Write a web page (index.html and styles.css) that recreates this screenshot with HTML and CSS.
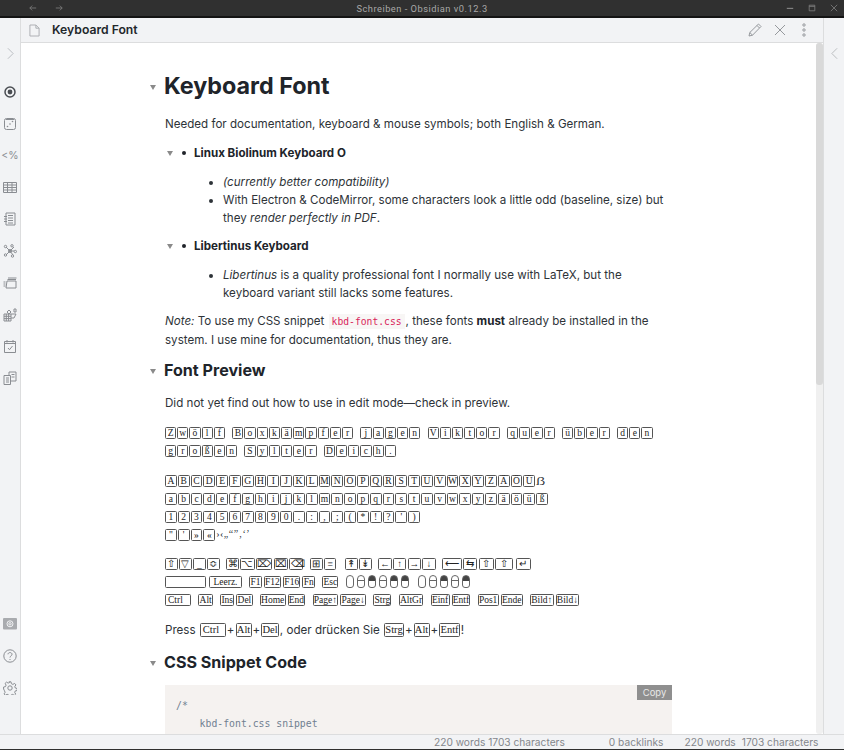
FILE: index.html
```html
<!DOCTYPE html>
<html lang="en">
<head>
    <meta charset="UTF-8">
    <title>Schreiben - Obsidian v0.12.3</title>
    <link rel="stylesheet" href="styles.css">
</head>
<body>

<div class="titlebar">
    <div class="nav-arrows">
        <svg class="win-icon" viewBox="0 0 10 10"><path d="M9 5H1M4 2L1 5l3 3"/></svg>
        <svg class="win-icon" viewBox="0 0 10 10"><path d="M1 5h8M6 2l3 3-3 3"/></svg>
    </div>
    <div class="window-title">Schreiben - Obsidian v0.12.3</div>
    <div class="win-controls">
        <svg class="win-icon" viewBox="0 0 10 10"><path d="M1 5.500h8" stroke-width="1.500"/></svg>
        <svg class="win-icon" viewBox="0 0 10 10"><path d="M1.500 1.500h7v7h-7zM1.500 3h7"/></svg>
        <svg class="win-icon" viewBox="0 0 10 10"><path d="M1 1l8 8M9 1l-8 8"/></svg>
    </div>
</div>

<div class="workspace">
    <div class="rail rail-left">
        <div class="rail-group">
            <svg class="rail-toggle" viewBox="0 0 8 14"><path d="M1 1l6 6-6 6"/></svg>
        </div>
        <div class="rail-icons">
            <svg class="rail-icon active" viewBox="0 0 14 14"><circle cx="7" cy="7" r="5" stroke-width="1.500"/><circle class="solid" cx="7" cy="7" r="2.400"/></svg>
            <svg class="rail-icon" viewBox="0 0 14 14"><rect x="1.500" y="1.500" width="11" height="11" rx="2"/><path d="M3 2.500h8"/><circle class="solid" cx="4.500" cy="9.500" r=".8"/><circle class="solid" cx="7" cy="7" r=".8"/><circle class="solid" cx="9.500" cy="4.500" r=".8"/></svg>
            <span class="rail-text">&lt;%</span>
            <svg class="rail-icon" viewBox="0 0 14 14"><path d="M.5 2.500h13v10H.5zM.5 5h13M.5 7.500h13M.5 10h13M4.500 2.500v10M9 2.500v10"/></svg>
            <svg class="rail-icon" viewBox="0 0 14 14"><path d="M3 1h9v12H3zM5 3.500h5M5 6h5M5 8.500h5M5 11h5M1 4.500h3M1 7h3M1 9.500h3"/></svg>
            <svg class="rail-icon" viewBox="0 0 14 14"><path d="M7 7L3 3M7 7l4-4M7 7L3 11M7 7l3 4M7 7h4"/><circle cx="7" cy="7" r="1.500"/><circle cx="2.500" cy="2.500" r="1.200"/><circle cx="9" cy="1.800" r="1.200"/><circle cx="2.500" cy="11" r="1.200"/><circle cx="9.500" cy="12" r="1.200"/><circle cx="12.300" cy="7.500" r="1.200"/></svg>
            <svg class="rail-icon" viewBox="0 0 14 14"><path d="M4 5h9v7H3zM4.500 3.500h8.500M5 2h8.500M.5 6h2M.5 8h2M.5 10h2"/></svg>
            <svg class="rail-icon" viewBox="0 0 14 14"><path d="M1 6h7v7H1zM1 8.300h7M1 10.600h7M3.300 6v7M5.600 6v7M4 4l2-2 2 2-2 2zM8 6h5l-2 4H8M11 1h2v3h-2z"/></svg>
            <svg class="rail-icon" viewBox="0 0 14 14"><path d="M1.500 2.500h11v11h-11zM1.500 4.500h11M4 1v2.500M10 1v2.500M5 9l1.500 1.700L9.500 7"/></svg>
            <svg class="rail-icon" viewBox="0 0 14 14"><path d="M1 4.500h6.500v9H1zM6 4.500V1h7v9H7.500M3 7h3M3 9h3M3 11h3M8.500 3.500h3M8.500 6h3"/></svg>
        </div>
        <div class="rail-icons rail-bottom">
            <svg class="rail-icon" viewBox="0 0 14 14"><rect class="solid soft" x="0" y="1" width="14" height="11.500" rx="1"/><circle class="white" cx="7" cy="6.800" r="3"/><circle class="white" cx="7" cy="6.800" r="1.200"/></svg>
            <svg class="rail-icon" viewBox="0 0 14 14"><circle cx="7" cy="7" r="6.200"/><path d="M5 5.300C5 3 9 3 9 5.300 9 7 7 6.800 7 8.500M7 10v1"/></svg>
            <svg class="rail-icon" viewBox="0 0 14 14"><circle cx="7" cy="7" r="2.200"/><path d="M6 .8h2l.4 1.900 1.500.7 1.700-1 1.300 1.500-1.100 1.600.5 1.500 1.900.5v2l-1.900.4-.6 1.500 1 1.700-1.400 1.300-1.600-1-1.500.5-.5 1.900H6l-.4-1.900-1.500-.6-1.700 1-1.300-1.400 1-1.600-.6-1.500L.6 8V6l1.900-.4.6-1.500-1-1.700 1.400-1.300 1.600 1 1.500-.6z"/></svg>
        </div>
    </div>

    <div class="main">
        <div class="view-header">
            <svg class="file-icon" viewBox="0 0 12 14"><path d="M1 1h6.500L11 4.500V13H1zM7.500 1v3.500H11"/></svg>
            <div class="view-title">Keyboard Font</div>
            <div class="view-actions">
                <svg class="action-icon" viewBox="0 0 14 14"><path d="M1 13l.8-3.500L10.500 1 13 3.500 4.500 12.200zM1.800 9.500l2.700 2.700M9 2.500L11.500 5"/></svg>
                <svg class="action-icon" viewBox="0 0 14 14"><path d="M2 2l10 10M12 2L2 12"/></svg>
                <svg class="action-icon" viewBox="0 0 14 14"><circle cx="7" cy="2" r="1.200"/><circle cx="7" cy="7" r="1.200"/><circle cx="7" cy="12" r="1.200"/></svg>
            </div>
        </div>

        <div class="view-body">
            <div class="preview">
                <h1><span class="fold"></span>Keyboard Font</h1>
                <p class="intro">Needed for documentation, keyboard &amp; mouse symbols; both English &amp; German.</p>

                <ul class="outer">
                    <li><span class="fold fold-li"></span><strong>Linux Biolinum Keyboard O</strong>
                        <ul class="inner">
                            <li><em>(currently better compatibility)</em></li>
                            <li>With Electron &amp; CodeMirror, some characters look a little odd (baseline, size) but they <em>render perfectly in PDF</em>.</li>
                        </ul>
                    </li>
                    <li><span class="fold fold-li"></span><strong>Libertinus Keyboard</strong>
                        <ul class="inner">
                            <li><em>Libertinus</em> is a quality professional font I normally use with LaTeX, but the keyboard variant still lacks some features.</li>
                        </ul>
                    </li>
                </ul>

                <p class="note"><em>Note:</em> To use my CSS snippet <code>kbd-font.css</code>, these fonts <strong>must</strong> already be installed in the system. I use mine for documentation, thus they are.</p>

                <h2><span class="fold"></span>Font Preview</h2>
                <p class="lead">Did not yet find out how to use in edit mode—check in preview.</p>

                <p class="keys"><span class="word"><b>Z</b><b>w</b><b>ö</b><b>l</b><b>f</b></span> <span class="word"><b>B</b><b>o</b><b>x</b><b>k</b><b>ä</b><b>m</b><b>p</b><b>f</b><b>e</b><b>r</b></span> <span class="word"><b>j</b><b>a</b><b>g</b><b>e</b><b>n</b></span> <span class="word"><b>V</b><b>i</b><b>k</b><b>t</b><b>o</b><b>r</b></span> <span class="word"><b>q</b><b>u</b><b>e</b><b>r</b></span> <span class="word"><b>ü</b><b>b</b><b>e</b><b>r</b></span> <span class="word"><b>d</b><b>e</b><b>n</b></span><br>
                <span class="word"><b>g</b><b>r</b><b>o</b><b>ß</b><b>e</b><b>n</b></span> <span class="word"><b>S</b><b>y</b><b>l</b><b>t</b><b>e</b><b>r</b></span> <span class="word"><b>D</b><b>e</b><b>i</b><b>c</b><b>h</b><b>.</b></span></p>

                <p class="keys keys-wide"><span class="word"><b>A</b><b>B</b><b>C</b><b>D</b><b>E</b><b>F</b><b>G</b><b>H</b><b>I</b><b>J</b><b>K</b><b>L</b><b>M</b><b>N</b><b>O</b><b>P</b><b>Q</b><b>R</b><b>S</b><b>T</b><b>U</b><b>V</b><b>W</b><b>X</b><b>Y</b><b>Z</b><b>Ä</b><b>Ö</b><b>Ü</b><i class="big">ẞ</i></span><br>
                <span class="word"><b>a</b><b>b</b><b>c</b><b>d</b><b>e</b><b>f</b><b>g</b><b>h</b><b>i</b><b>j</b><b>k</b><b>l</b><b>m</b><b>n</b><b>o</b><b>p</b><b>q</b><b>r</b><b>s</b><b>t</b><b>u</b><b>v</b><b>w</b><b>x</b><b>y</b><b>z</b><b>ä</b><b>ö</b><b>ü</b><b>ß</b></span><br>
                <span class="word"><b>1</b><b>2</b><b>3</b><b>4</b><b>5</b><b>6</b><b>7</b><b>8</b><b>9</b><b>0</b><b>.</b><b>:</b><b>,</b><b>;</b><b>(</b><b>*</b><b>!</b><b>?</b><b>'</b><b>)</b></span><br>
                <span class="word"><b>"</b><b>'</b><b>»</b><b>«</b><i>›‹„“”‚‘’</i></span></p>

                <p class="keys keys-mixed"><span class="word sym"><b>⇧</b><b>▽</b><b>_</b><b>≎</b></span> <span class="word sym"><b>⌘</b><b>⌥</b><b>⌦</b><b>⌧</b><b class="w14">⌫</b></span> <span class="word sym"><b>⊞</b><b>≡</b></span> <span class="word sym gap"><b>↟</b><b>↡</b></span> <span class="word sym arrows"><b>←</b><b>↑</b><b>→</b><b>↓</b></span> <span class="word sym"><b class="w20">⟵</b><b class="w14">⇆</b><b class="w15">⇧</b><b class="w18">⇧</b></span><b class="w15">↵</b><br>
                <span class="word"><b class="space"></b><b class="leerz">Leerz.</b></span> <span class="word labels"><b>F1</b><b>F12</b><b>F16</b><b>Fn</b></span> <span class="word labels"><b>Esc</b></span> <span class="mice"><u></u><u class="mid"></u><u class="left"></u><u class="mid"></u><u class="left"></u><u class="left"></u></span> <span class="mice"><u></u><u class="mid"></u><u class="left"></u><u class="mid"></u><u class="left"></u></span><br>
                <span class="word labels"><b class="ctrl">Ctrl</b></span> <span class="word labels"><b>Alt</b></span> <span class="word labels"><b>Ins</b><b>Del</b></span> <span class="word labels"><b>Home</b><b>End</b></span> <span class="word labels"><b>Page↑</b><b>Page↓</b></span> <span class="word labels"><b>Strg</b></span> <span class="word labels"><b>AltGr</b></span> <span class="word labels"><b>Einf</b><b>Entf</b></span> <span class="word labels"><b>Pos1</b><b>Ende</b></span> <span class="word labels"><b>Bild↑</b><b>Bild↓</b></span></p>

                <p class="press">Press <b class="ctrl">Ctrl</b>+<b>Alt</b>+<b>Del</b>, oder drücken Sie <b>Strg</b>+<b>Alt</b>+<b>Entf</b>!</p>

                <h2 class="snippet-title"><span class="fold"></span>CSS Snippet Code</h2>
                <div class="codeblock">
                    <button class="copy">Copy</button>
                    <pre>/*
    kbd-font.css snippet
</pre>
                </div>
            </div>
            <div class="scrollbar"><div class="thumb"></div></div>
        </div>
    </div>

    <div class="rail rail-right">
        <svg class="rail-toggle" viewBox="0 0 8 14"><path d="M7 1L1 7l6 6"/></svg>
    </div>
</div>

<div class="statusbar">
    <span class="status-a">220 words 1703 characters</span>
    <span class="status-b">0 backlinks</span>
    <span class="status-c">220 words</span>
    <span class="status-d">1703 characters</span>
</div>

</body>
</html>
```

FILE: styles.css
```css
html, body {
    margin: 0;
    padding: 0;
    height: 100%;
}
body {
    display: flex;
    flex-direction: column;
    height: 750px;
    overflow: hidden;
    font-family: Inter, "Liberation Sans", sans-serif;
    color: #2e3338;
    background-color: #f2f3f5;
    border-bottom: 1px solid #2f2f2f;
    box-sizing: border-box;
}

/* title bar */
.titlebar {
    display: flex;
    align-items: center;
    flex: none;
    position: relative;
    height: 16px;
    padding: 0 0 0 29px;
    background-color: #303030;
    border-bottom: 2px solid #141414;
}
.nav-arrows {
    display: flex;
    gap: 18px;
}
.win-icon {
    width: 8px;
    height: 8px;
    fill: none;
    stroke: #808080;
    stroke-width: 1;
}
.window-title {
    position: absolute;
    left: 0;
    right: 0;
    text-align: center;
    font-family: "Roboto", sans-serif;
    font-size: 9.300px;
    letter-spacing: .5px;
    color: #a8a8a8;
}
.win-controls {
    display: flex;
    gap: 14px;
    margin-left: auto;
    padding-right: 6px;
}

/* side rails */
.workspace {
    display: flex;
    flex: 1;
    min-height: 0;
}
.rail {
    flex: none;
    width: 20px;
    display: flex;
    flex-direction: column;
    align-items: center;
    background-color: #f2f3f5;
}
.rail-left {
    border-right: 1px solid #dcddde;
}
.rail-right {
    width: 20px;
    border-left: 1px solid #dcddde;
}
.rail-toggle {
    width: 7px;
    height: 13px;
    margin-top: 29px;
    fill: none;
    stroke: #b4b6ba;
    stroke-width: 1;
}
.rail-group {
    height: 60px;
}
.rail-left .rail-toggle {
    display: block;
}
.rail-icons {
    display: flex;
    flex-direction: column;
    align-items: center;
    gap: 17.800px;
    margin-top: 7px;
}
.rail-bottom {
    margin-top: auto;
    margin-bottom: 39px;
}
.rail-icon {
    width: 14px;
    height: 14px;
    fill: none;
    stroke: #8a8d92;
    stroke-width: 1;
}
.rail-icon.active {
    stroke: #4a4d52;
}
.rail-icon .solid {
    fill: #8a8d92;
    stroke: none;
}
.rail-icon.active .solid {
    fill: #4a4d52;
}
.rail-icon .soft {
    fill: #a9abaf;
}
.rail-icon .white {
    stroke: #f2f3f5;
}
.rail-text {
    height: 14px;
    line-height: 14px;
    font-size: 10.500px;
    color: #8a8d92;
}

/* main pane */
.main {
    flex: 1;
    min-width: 0;
    display: flex;
    flex-direction: column;
}
.view-header {
    flex: none;
    display: flex;
    align-items: center;
    height: 24px;
    border-bottom: 1px solid #dcddde;
}
.file-icon {
    width: 11px;
    height: 13px;
    margin-left: 8px;
    fill: none;
    stroke: #a9abaf;
    stroke-width: 1;
}
.view-title {
    margin-left: 12px;
    padding-bottom: 2px;
    font-size: 12.200px;
    font-weight: 600;
    color: #23272b;
}
.view-actions {
    display: flex;
    align-items: center;
    gap: 10.500px;
    margin-left: auto;
    padding-right: 12px;
}
.action-icon {
    width: 14px;
    height: 14px;
    fill: none;
    stroke: #8b8e93;
    stroke-width: .9;
}
.view-body {
    flex: 1;
    min-height: 0;
    display: flex;
    background-color: #fff;
}
.scrollbar {
    flex: none;
    width: 7px;
    background-color: #f0f0f0;
    border-radius: 3px;
}
.thumb {
    height: 342px;
    background-color: #d9d9d9;
    border-radius: 3px;
}

/* note preview */
.preview {
    flex: 1;
    min-width: 0;
    overflow: hidden;
    padding: 26px 0 0 144px;
    font-size: 11.600px;
    line-height: 18px;
}
.preview p {
    margin: 0;
    width: 500px;
}
.fold {
    display: inline-block;
    width: 0;
    height: 0;
    margin-left: -15.500px;
    margin-right: 8.500px;
    vertical-align: middle;
    border-left: 3.500px solid transparent;
    border-right: 3.500px solid transparent;
    border-top: 5px solid #8a8a8a;
}
h1 {
    margin: 0 0 12px;
    font-size: 23.300px;
    line-height: 34px;
    font-weight: 700;
    color: #20242a;
}
h2 {
    margin: 10px 0 13px;
    font-size: 16.100px;
    line-height: 22px;
    font-weight: 700;
    color: #20242a;
}
strong {
    font-weight: 700;
    color: #20242a;
}
.outer {
    list-style: none;
    margin: 11px 0 9px;
    padding: 0 0 0 29px;
    width: 480px;
}
.outer > li {
    position: relative;
    margin-bottom: 10px;
}
.outer > li::before {
    content: "";
    position: absolute;
    left: -12px;
    top: 7px;
    width: 4px;
    height: 4px;
    border-radius: 50%;
    background-color: #20242a;
}
.fold-li {
    position: absolute;
    left: -27px;
    top: 7px;
    margin: 0;
}
.inner {
    margin: 11px 0 0;
    padding: 0 0 0 29px;
    list-style-type: disc;
}
.note {
    margin-top: 10px !important;
}
code {
    font-family: "DejaVu Sans Mono", monospace;
    font-size: 9.700px;
    color: #d9245a;
    background-color: #f8f6f5;
    padding: 2px 3px;
    margin: 0 1px;
}

/* keyboard glyphs */
.keys {
    margin-top: 12px !important;
}
.keys-mixed {
    margin-top: 11px !important;
}
.word {
    white-space: nowrap;
    margin-right: 3px;
}
.sym, .labels {
    margin-right: 2px;
}
.gap {
    margin-left: 2px;
}
.keys b, .press b {
    display: inline-block;
    box-sizing: border-box;
    min-width: 11.200px;
    height: 12px;
    margin-top: 3px;
    margin-right: 1px;
    padding: 0 .25px;
    vertical-align: top;
    text-align: center;
    font-family: "Liberation Serif", serif;
    font-size: 9.500px;
    font-weight: 400;
    line-height: 10px;
    color: #222;
    border: 1px solid #555;
    border-right-width: 1.500px;
    border-radius: 1.500px;
    background-color: #fff;
}
.keys-wide b {
    min-width: 11.800px;
}
.keys .sym b {
    min-width: 12.800px;
    margin-right: 1.200px;
}
.keys .arrows b {
    min-width: 13.500px;
}
.keys .labels b {
    margin-right: 2px;
}
.keys i {
    display: inline-block;
    vertical-align: top;
    line-height: 16px;
    font-family: "Liberation Serif", serif;
    font-style: normal;
    font-size: 10px;
    letter-spacing: .5px;
}
.keys .big {
    font-size: 13px;
    line-height: 18px;
}
.keys .w14 {
    width: 14px;
}
.keys .w15 {
    width: 15px;
}
.keys .w18 {
    width: 18px;
}
.keys .w20 {
    width: 20px;
}
.keys .space {
    width: 41px;
    margin-right: 3px;
}
.keys .leerz {
    width: 33px;
}
.keys .ctrl, .press .ctrl {
    width: 26px;
    text-align: left;
    padding-left: 2px;
}
.mice {
    margin-right: 3px;
    white-space: nowrap;
}
.mice u {
    display: inline-block;
    box-sizing: border-box;
    width: 8px;
    height: 13px;
    margin-top: 2px;
    margin-right: 3px;
    vertical-align: top;
    border: 1px solid #666;
    border-radius: 4px 4px 3px 3px;
}
.mice .mid {
    background: linear-gradient(transparent 4px, #666 4px, #666 5px, transparent 5px);
}
.mice .left {
    background: linear-gradient(#444 5px, transparent 5px);
}
.press {
    margin-top: 12px !important;
}
.press b {
    height: 14px;
    min-width: 16px;
    margin: 2px 1px 0;
    font-size: 10.500px;
    line-height: 12px;
}
.snippet-title {
    margin: 12px 0 12px;
}
.codeblock {
    position: relative;
    width: 507px;
    height: 120px;
    background-color: #f5f2f0;
}
.codeblock pre {
    margin: 0;
    padding: 12px 11px;
    font-family: "DejaVu Sans Mono", monospace;
    font-size: 9.800px;
    line-height: 18px;
    color: #708090;
}
.copy {
    position: absolute;
    top: 0;
    right: 0;
    width: 35px;
    height: 15px;
    padding: 0;
    font-family: Inter, sans-serif;
    font-size: 9.500px;
    color: #e8e8e8;
    background-color: #8f8f8f;
    border: none;
}

/* status bar */
.statusbar {
    flex: none;
    display: flex;
    align-items: center;
    height: 14px;
    font-size: 10.200px;
    color: #84878c;
    border-top: 1px solid #dcddde;
    background-color: #f2f3f5;
    white-space: nowrap;
}
.status-a {
    margin-left: 434px;
}
.status-b {
    margin-left: 44px;
}
.status-c {
    margin-left: 21px;
}
.status-d {
    margin-left: 6px;
}
```
